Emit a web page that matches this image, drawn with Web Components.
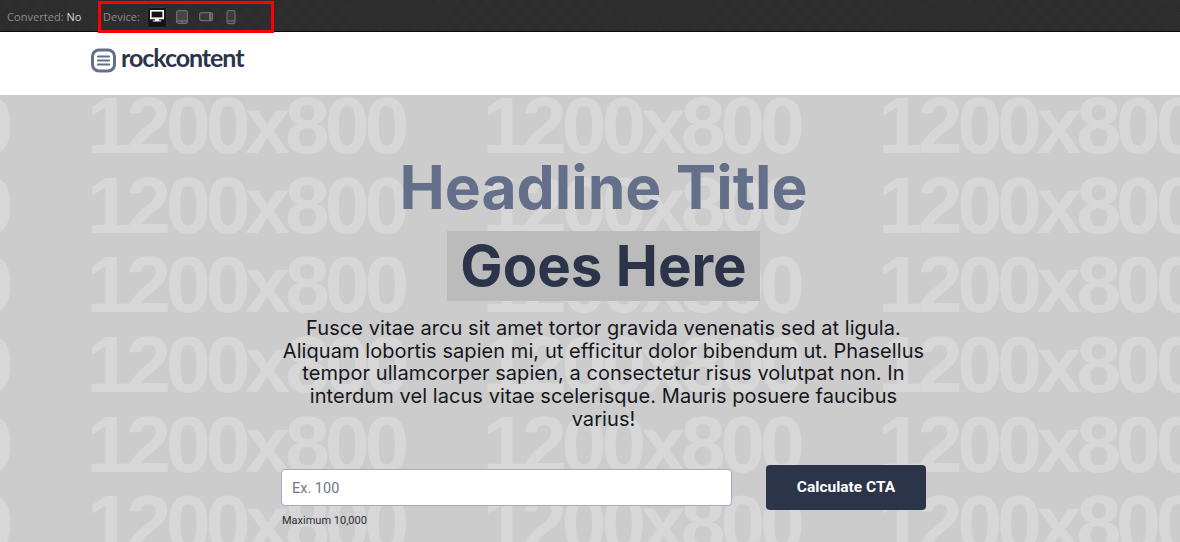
<!DOCTYPE html>
<html lang="en">
<head>
<meta charset="utf-8">
<title>Landing preview</title>
<style>
    html, body { margin: 0; padding: 0; height: 100%; overflow: hidden; background: #fff; }
    body { font-family: "Inter", sans-serif; }
</style>
</head>
<body>
<preview-bar></preview-bar>
<site-header></site-header>
<hero-section>
    <span slot="top">Headline Title</span>
    <span slot="mark">Goes Here</span>
    Fusce vitae arcu sit amet tortor gravida venenatis sed at ligula. Aliquam lobortis sapien mi, ut efficitur dolor bibendum ut. Phasellus tempor ullamcorper sapien, a consectetur risus volutpat non. In interdum vel lacus vitae scelerisque. Mauris posuere faucibus varius!
    <calc-form slot="form"></calc-form>
</hero-section>

<script>
class DeviceButton extends HTMLElement {
    constructor() {
        super();
        this.attachShadow({mode: "open"});
    }

    connectedCallback() {
        const icons = {
            desktop: `<rect x="3.800" y="3.800" width="12.400" height="7.400" fill="none" stroke="currentColor" stroke-width="1.600"/><path d="M3 11h14v1.200H3zM8 12.200h4v1.400h2.200v1H5.800v-1H8z" fill="currentColor"/>`,
            tablet: `<rect x="4.600" y="3.600" width="10.800" height="12.800" rx="2" fill="#454545" stroke="currentColor" stroke-width="1.200"/><path d="M5 13.300h10v1.200h-4v1H9v-1H5z" fill="currentColor"/>`,
            landscape: `<rect x="3.600" y="5.600" width="13" height="8" rx="2" fill="#3a3a3a" stroke="currentColor" stroke-width="1.200"/><path d="M13 6h2.500v7H13z" fill="currentColor"/>`,
            phone: `<rect x="6" y="3.600" width="8" height="13" rx="2" fill="#3a3a3a" stroke="currentColor" stroke-width="1.200"/><path d="M6.500 13.300h7v1.200h-7z" fill="currentColor"/>`
        };
        const on = this.hasAttribute("active");
        this.shadowRoot.innerHTML = `
            <style>
                :host {
                    display: flex;
                    align-items: center;
                    justify-content: center;
                    width: 20px;
                    height: 21px;
                    border-radius: 3px;
                    color: ${on ? "#fff" : "#6e6e6e"};
                    background: ${on ? "#141414" : "transparent"};
                    box-shadow: ${on ? "inset 0 0 0 1px #363636" : "none"};
                }
                svg { width: 20px; height: 20px; display: block; }
            </style>
            <svg viewBox="0 0 20 20">${icons[this.getAttribute("icon")]}</svg>
        `;
    }
}

class PreviewBar extends HTMLElement {
    constructor() {
        super();
        this.attachShadow({mode: "open"});
        this.shadowRoot.innerHTML = `
            <style>
                :host {
                    display: flex;
                    align-items: flex-start;
                    height: 31px;
                    border-bottom: 1px solid #0a0a0a;
                    background-color: #2e2e2e;
                    background-image:
                        repeating-linear-gradient(45deg, rgba(255,255,255,.012) 0 1px, transparent 1px 2px),
                        repeating-linear-gradient(-45deg, rgba(0,0,0,.08) 0 1px, transparent 1px 2px);
                    font: 11px/14px "Open Sans", sans-serif;
                    color: #8c8c8c;
                    padding-left: 7px;
                }
                b { font-weight: 400; color: #d8d8d8; }
                .converted { width: 91px; white-space: nowrap; margin-top: 10px; letter-spacing: .04px; }
                .devices {
                    display: flex;
                    align-items: center;
                    gap: 4.500px;
                    height: 26px;
                    width: 168px;
                    border: 3px solid #f00;
                    padding-left: 2px;
                    margin-top: 1px;
                }
                .label { margin-right: 1.500px; width: 38px; }
            </style>
            <span class="converted">Converted: <b>No</b></span>
            <div class="devices">
                <span class="label">Device:</span>
                <device-button icon="desktop" active></device-button>
                <device-button icon="tablet"></device-button>
                <device-button icon="landscape"></device-button>
                <device-button icon="phone"></device-button>
            </div>
        `;
    }
}

class SiteHeader extends HTMLElement {
    constructor() {
        super();
        this.attachShadow({mode: "open"});
        this.shadowRoot.innerHTML = `
            <style>
                :host {
                    display: flex;
                    align-items: center;
                    gap: 5px;
                    height: 56px;
                    padding: 0 0 7px 91px;
                    background: #fff;
                }
                svg { width: 25px; height: 25px; display: block; }
                span {
                    font: 700 25px/25px "Lato", sans-serif;
                    letter-spacing: -1.050px;
                    color: #2b3448;
                    margin-top: -5px;
                }
            </style>
            <svg viewBox="0 0 25 25">
                <rect x="1.500" y="2" width="22" height="21" rx="6.500" fill="none" stroke="#64708a" stroke-width="3"/>
                <path d="M7 8.500h11M7 12.500h11M7 16.500h11" stroke="#64708a" stroke-width="2.200" stroke-linecap="round"/>
            </svg>
            <span>rockcontent</span>
        `;
    }
}

class PlaceholderBackdrop extends HTMLElement {
    constructor() {
        super();
        this.attachShadow({mode: "open"});
        let cells = "";
        for (let i = 0; i < 6 * 4; i++) cells += "<span>1200x800</span>";
        this.shadowRoot.innerHTML = `
            <style>
                :host {
                    position: absolute;
                    left: -309px;
                    top: -9px;
                    display: grid;
                    grid-template-columns: repeat(4, 395.700px);
                    grid-auto-rows: 79.700px;
                    pointer-events: none;
                }
                span {
                    font: 700 80.500px/79.700px "Liberation Sans", Arial, sans-serif;
                    letter-spacing: -5.100px;
                    color: #d7d7d7;
                    white-space: nowrap;
                }
            </style>
            ${cells}
        `;
    }
}

class HeroSection extends HTMLElement {
    constructor() {
        super();
        this.attachShadow({mode: "open"});
        this.shadowRoot.innerHTML = `
            <style>
                :host {
                    display: block;
                    position: relative;
                    height: 447px;
                    overflow: hidden;
                    background: #cccccc;
                }
                .col {
                    position: relative;
                    box-sizing: border-box;
                    width: 645px;
                    margin-left: 281px;
                    padding-top: 56px;
                    display: flex;
                    flex-direction: column;
                    align-items: center;
                }
                h1 {
                    margin: 0;
                    display: flex;
                    flex-direction: column;
                    align-items: center;
                    font: 700 60.600px/72px "Inter", sans-serif;
                    color: #64708a;
                    text-align: center;
                }
                .mark {
                    display: block;
                    height: 70px;
                    line-height: 70px;
                    padding: 0 13.500px;
                    margin-top: 8px;
                    font-size: 56.400px;
                    background: #bbbbbb;
                    color: #2b3448;
                }
                p {
                    margin: 16px 0 0;
                    width: 645px;
                    font: 400 20px/22.700px "Inter", sans-serif;
                    letter-spacing: .07px;
                    color: #16161d;
                    text-align: center;
                }
                .form { align-self: stretch; margin-top: 34px; }
            </style>
            <placeholder-backdrop></placeholder-backdrop>
            <div class="col">
                <h1><slot name="top"></slot><span class="mark"><slot name="mark"></slot></span></h1>
                <p><slot></slot></p>
                <div class="form"><slot name="form"></slot></div>
            </div>
        `;
    }
}

class CalcForm extends HTMLElement {
    constructor() {
        super();
        this.attachShadow({mode: "open"});
        this.shadowRoot.innerHTML = `
            <style>
                :host { display: flex; gap: 34px; align-items: flex-start; }
                .field { width: 451px; padding-top: 4px; }
                input {
                    display: block;
                    box-sizing: border-box;
                    width: 100%;
                    height: 37px;
                    padding: 3px 10px 0;
                    background: #fff;
                    border: 1px solid #a4abbf;
                    border-radius: 4px;
                    font: 14.500px "Roboto", sans-serif;
                    outline: none;
                }
                input::placeholder { color: #6f7785; opacity: 1; }
                small {
                    display: block;
                    margin: 8px 0 0 1px;
                    font: 11px/14px "Roboto", sans-serif;
                    color: #2b2f38;
                }
                button {
                    width: 160px;
                    height: 45px;
                    border: 0;
                    border-radius: 4px;
                    background: #2b3448;
                    color: #fff;
                    font: 700 15.500px "Roboto", sans-serif;
                }
            </style>
            <div class="field">
                <input type="text" placeholder="Ex. 100">
                <small>Maximum 10,000</small>
            </div>
            <button type="button">Calculate CTA</button>
        `;
    }
}

customElements.define("device-button", DeviceButton);
customElements.define("preview-bar", PreviewBar);
customElements.define("site-header", SiteHeader);
customElements.define("placeholder-backdrop", PlaceholderBackdrop);
customElements.define("hero-section", HeroSection);
customElements.define("calc-form", CalcForm);
</script>
</body>
</html>
